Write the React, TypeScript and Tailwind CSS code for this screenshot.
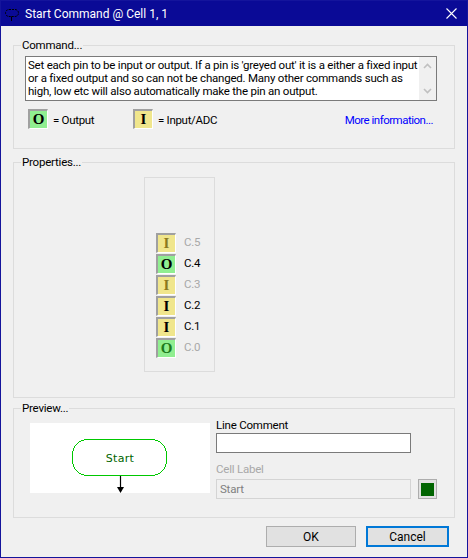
const font = { fontFamily: 'Roboto, "Noto Sans", sans-serif' }

const PinBox = ({ letter, kind, dim }: { letter: string; kind: 'in' | 'out'; dim?: boolean }) => (
  <div
    className={`flex h-[20px] w-[20px] items-center justify-center border-t-2 border-l-2 border-r border-b border-t-[#a0a0a0] border-l-[#a0a0a0] border-r-white border-b-white font-['Liberation_Serif',serif] text-[15px] leading-none font-bold tracking-normal ${
      kind === 'in' ? 'bg-[#f0e68c]' : 'bg-[#90ee90]'
    } ${dim ? (kind === 'in' ? 'text-[#8b7a1e]' : 'text-[#1c7a1c]') : 'text-black'}`}
  >
    {letter}
  </div>
)

const pins: { letter: string; kind: 'in' | 'out'; name: string; dim?: boolean }[] = [
  { letter: 'I', kind: 'in', name: 'C.5', dim: true },
  { letter: 'O', kind: 'out', name: 'C.4' },
  { letter: 'I', kind: 'in', name: 'C.3', dim: true },
  { letter: 'I', kind: 'in', name: 'C.2' },
  { letter: 'I', kind: 'in', name: 'C.1' },
  { letter: 'O', kind: 'out', name: 'C.0', dim: true },
]

const Group = ({ title, className, children }: { title: string; className: string; children: React.ReactNode }) => (
  <fieldset className={`border border-[#dcdcdc] ${className}`}>
    <legend className="ml-[7px] px-[1px] leading-[16px] text-black">{title}</legend>
    {children}
  </fieldset>
)

export default function App() {
  return (
    <div
      style={font}
      className="flex h-[558px] w-[468px] flex-col overflow-hidden border border-[#14149c] bg-[#f0f0f0] text-[11.5px] tracking-[-0.22px] text-black"
    >
      <header className="flex h-[25px] shrink-0 items-center bg-[#0a0a96] pr-[10px] pl-[4px] text-white">
        <svg width="14" height="15" viewBox="0 0 14 15" className="mr-[6px]">
          <rect x=".5" y="3.5" width="13" height="7" rx="3.5" fill="none" stroke="#000" strokeDasharray="2 1" />
          <path d="M6.5 10.5V15" stroke="#000" />
        </svg>
        <span className="text-[12px] tracking-normal">Start Command @ Cell 1, 1</span>
        <svg width="11" height="11" viewBox="0 0 11 11" className="ml-auto">
          <path d="M.5.5l10 10M10.5.5l-10 10" stroke="#fff" strokeWidth="1.1" />
        </svg>
      </header>

      <main className="flex flex-1 flex-col px-[12px] pt-[11px]">
        <Group title="Command..." className="h-[112px]">
          <div className="px-[11px] pt-[3px]">
            <div className="flex h-[45px] w-[412px] border border-[#7a7a7a] bg-white">
              <p className="flex-1 pt-[2px] pl-[2px] leading-[13px]">
                Set each pin to be input or output. If a pin is 'greyed out' it is a either a fixed input or a fixed
                output and so can not be changed. Many other commands such as high, low etc will also automatically
                make the pin an output.
              </p>
              <div className="flex w-[17px] flex-col items-center justify-between bg-[#f0f0f0] py-[6px]">
                <svg width="9" height="6" viewBox="0 0 9 6">
                  <path d="M1 5l3.5-3.5L8 5" fill="none" stroke="#c0c0c0" strokeWidth="1.6" />
                </svg>
                <svg width="9" height="6" viewBox="0 0 9 6">
                  <path d="M1 1l3.5 3.5L8 1" fill="none" stroke="#c0c0c0" strokeWidth="1.6" />
                </svg>
              </div>
            </div>
            <div className="mt-[8px] flex items-center pr-[10px] pl-[3px]">
              <PinBox letter="O" kind="out" />
              <span className="ml-[5px] w-[80px] pt-[3px] tracking-[-0.3px]">= Output</span>
              <PinBox letter="I" kind="in" />
              <span className="ml-[5px] pt-[3px] tracking-[-0.3px]">= Input/ADC</span>
              <span className="ml-auto pt-[3px] tracking-[-0.5px] text-[#0000ff]">More information...</span>
            </div>
          </div>
        </Group>

        <Group title="Properties..." className="mt-[5px] h-[244px]">
          <div className="pt-[7px] pl-[130px]">
            <div className="flex h-[195px] w-[71px] flex-col justify-end gap-[1px] border border-[#dcdcdc] pb-[13px] pl-[11px]">
              {pins.map(pin => (
                <div key={pin.name} className="flex items-center gap-[8px]">
                  <PinBox letter={pin.letter} kind={pin.kind} dim={pin.dim} />
                  <span className={pin.dim ? 'text-[#a8a8a8]' : 'text-black'}>{pin.name}</span>
                </div>
              ))}
            </div>
          </div>
        </Group>

        <Group title="Preview..." className="mt-[2px] h-[118px]">
          <div className="flex gap-[6px] pt-[7px] pl-[16px]">
            <div className="h-[70px] w-[180px] bg-white">
              <svg width="180" height="70" viewBox="0 0 180 70">
                <rect x="42.5" y="16.5" width="94" height="36" rx="15" fill="#fff" stroke="#00c800" shapeRendering="crispEdges" />
                <text
                  x="90"
                  y="39"
                  textAnchor="middle"
                  fontFamily="DejaVu Sans"
                  fontSize="11"
                  letterSpacing=".3"
                  fill="#006400"
                >
                  Start
                </text>
                <path d="M90.5 53v12" stroke="#000" strokeWidth="1.2" />
                <path d="M87 64h7l-3.5 6z" fill="#000" />
              </svg>
            </div>
            <div className="flex flex-col">
              <label className="mt-[-6px] leading-[16px]">Line Comment</label>
              <div className="h-[20px] w-[195px] border border-[#7a7a7a] bg-white" />
              <label className="mt-[8px] leading-[16px] text-[#a8a8a8]">Cell Label</label>
              <div className="mt-[2px] flex items-center gap-[7px]">
                <div className="flex h-[20px] w-[195px] items-center border border-[#d4d4d4] pt-[1px] pl-[3px] text-[#808080]">
                  Start
                </div>
                <div className="flex h-[20px] w-[19px] items-center justify-center border border-[#adadad] bg-[#e1e1e1]">
                  <div className="h-[13px] w-[13px] bg-[#006400]" />
                </div>
              </div>
            </div>
          </div>
        </Group>

        <div className="mt-[8px] flex justify-end gap-[10px] pr-[6px]">
          <button className="h-[21px] w-[90px] border border-[#adadad] bg-[#e1e1e1] text-[12px] tracking-normal">OK</button>
          <button className="h-[21px] w-[83px] border-2 border-[#0078d7] bg-[#e1e1e1] text-[12px] tracking-normal">Cancel</button>
        </div>
      </main>
    </div>
  )
}
